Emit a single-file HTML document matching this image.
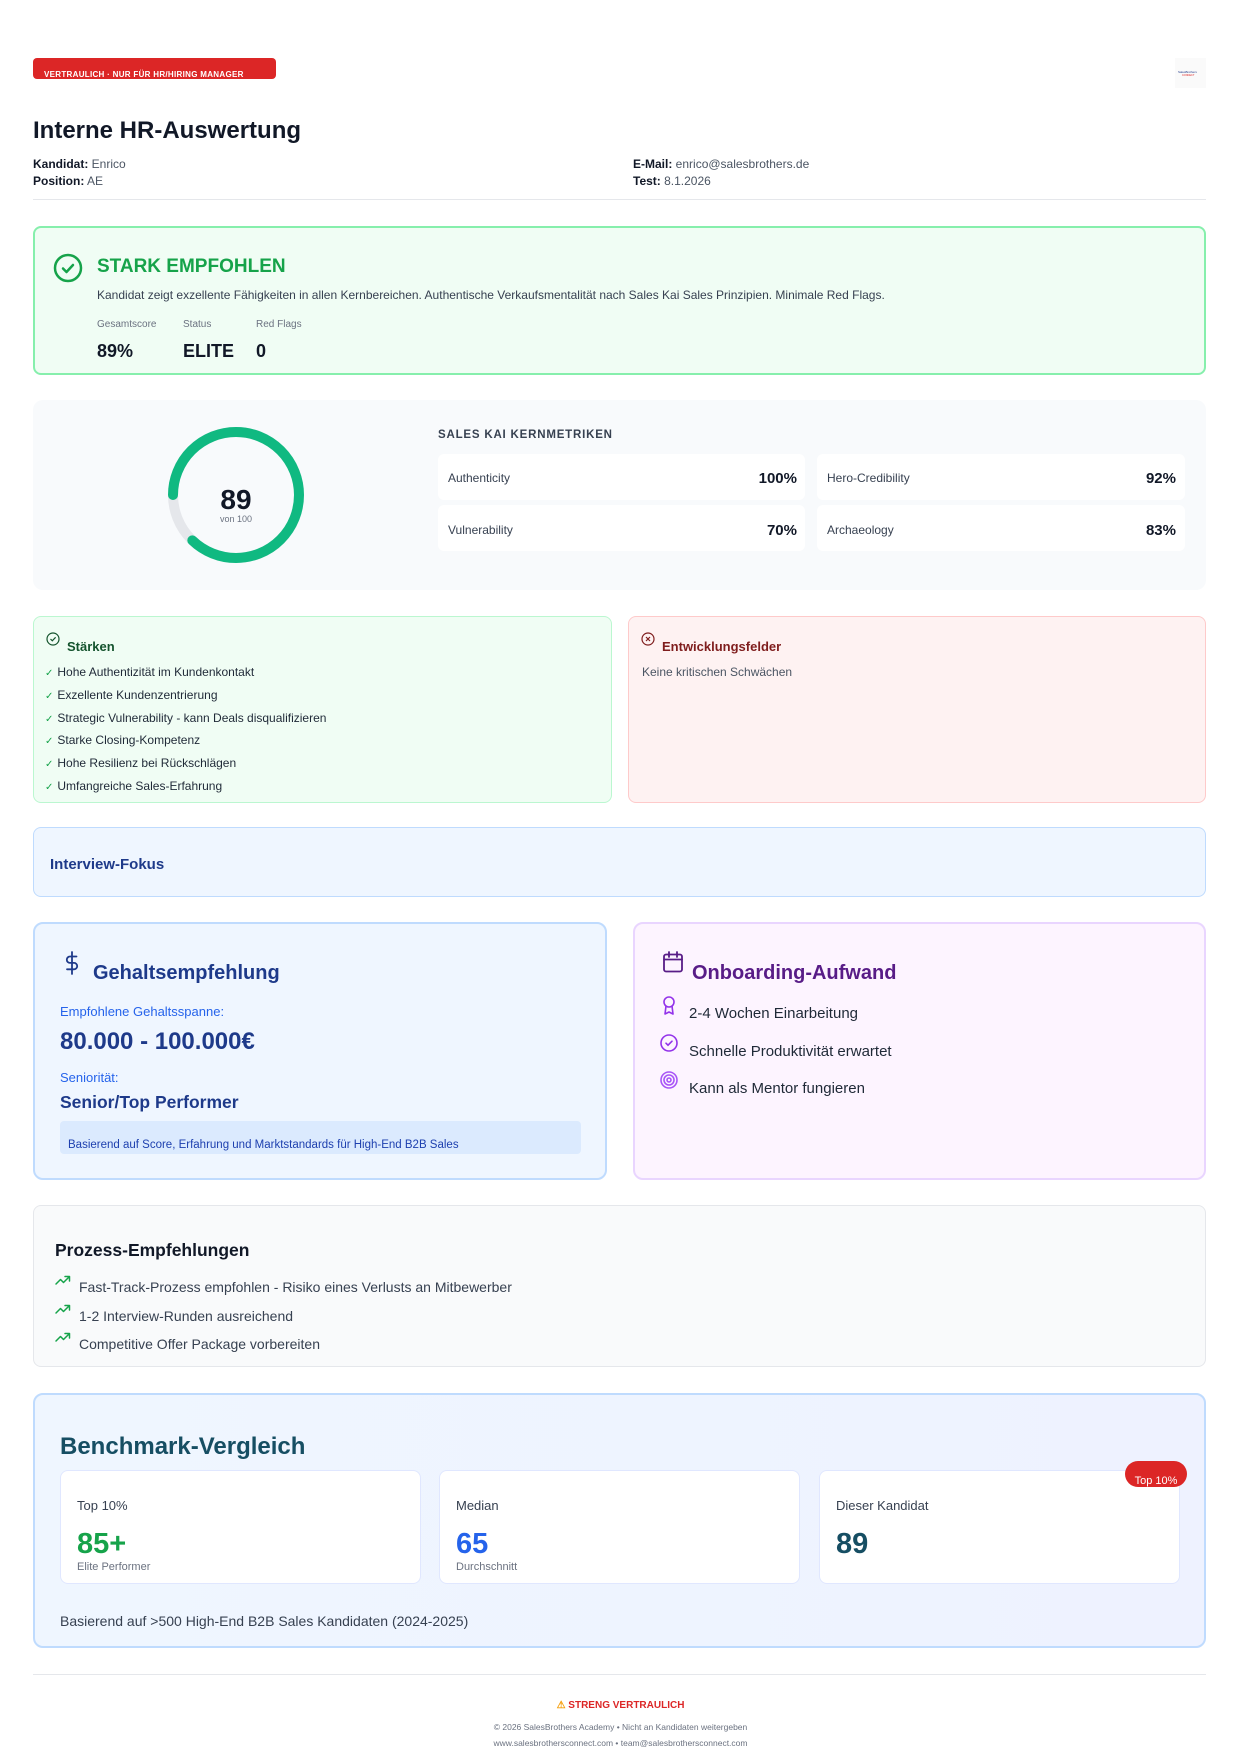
<!DOCTYPE html>
<html><head><meta charset="utf-8">
<style>
*{margin:0;padding:0;box-sizing:border-box}
body{width:1241px;height:1754px;position:relative;background:#fff;font-family:"Liberation Sans",Arial,sans-serif;color:#111827;overflow:hidden}
.t{position:absolute;white-space:nowrap;line-height:1}
.box{position:absolute}
b{font-weight:700}
svg{position:absolute;overflow:visible}
.li{position:absolute;left:45px;white-space:nowrap;line-height:1;font-size:12px;color:#1f2937}
.li i{font-style:normal;color:#16a34a;font-size:10px;margin-right:4px}
</style></head><body>

<!-- header -->
<div class="box" style="left:33px;top:58px;width:243px;height:21px;background:#dc2626;border-radius:4px"></div>
<div class="t" style="left:44px;top:71px;font-size:8px;font-weight:700;color:#fff;letter-spacing:0.3px">VERTRAULICH · NUR FÜR HR/HIRING MANAGER</div>
<div class="box" style="left:1175px;top:58px;width:31px;height:30px;background:#fafafa"></div>
<div class="t" style="left:1178px;top:71px;font-size:3px;color:#1e3a8a">SalesBrothers</div>
<div class="t" style="left:1182px;top:75px;font-size:2.5px;color:#dc2626">CONNECT</div>

<div class="t" style="left:33px;top:119px;font-size:24px;font-weight:700;color:#111827">Interne HR-Auswertung</div>
<div class="t" style="left:33px;top:158px;font-size:12px;color:#4b5563"><b style="color:#111827">Kandidat:</b> Enrico</div>
<div class="t" style="left:33px;top:175px;font-size:12px;color:#4b5563"><b style="color:#111827">Position:</b> AE</div>
<div class="t" style="left:633px;top:158px;font-size:12px;color:#4b5563"><b style="color:#111827">E-Mail:</b> enrico@salesbrothers.de</div>
<div class="t" style="left:633px;top:175px;font-size:12px;color:#4b5563"><b style="color:#111827">Test:</b> 8.1.2026</div>
<div class="box" style="left:33px;top:199px;width:1173px;height:1px;background:#e5e7eb"></div>

<!-- recommendation -->
<div class="box" style="left:33px;top:226px;width:1173px;height:149px;background:#f0fdf4;border:2px solid #86efac;border-radius:8px"></div>
<svg style="left:53px;top:253px" width="30" height="30" viewBox="0 0 30 30"><circle cx="15" cy="15" r="13" fill="none" stroke="#16a34a" stroke-width="2.5"/><path d="M10 15.5l3.5 3.5 6.5-7" fill="none" stroke="#16a34a" stroke-width="2.5" stroke-linecap="round" stroke-linejoin="round"/></svg>
<div class="t" style="left:97px;top:257px;font-size:19px;font-weight:700;color:#16a34a">STARK EMPFOHLEN</div>
<div class="t" style="left:97px;top:289px;font-size:12px;color:#374151">Kandidat zeigt exzellente Fähigkeiten in allen Kernbereichen. Authentische Verkaufsmentalität nach Sales Kai Sales Prinzipien. Minimale Red Flags.</div>
<div class="t" style="left:97px;top:320px;font-size:10px;color:#6b7280">Gesamtscore</div>
<div class="t" style="left:183px;top:320px;font-size:10px;color:#6b7280">Status</div>
<div class="t" style="left:256px;top:320px;font-size:10px;color:#6b7280">Red Flags</div>
<div class="t" style="left:97px;top:342px;font-size:18px;font-weight:700;color:#111827">89%</div>
<div class="t" style="left:183px;top:342px;font-size:18px;font-weight:700;color:#111827">ELITE</div>
<div class="t" style="left:256px;top:342px;font-size:18px;font-weight:700;color:#111827">0</div>

<!-- metrics -->
<div class="box" style="left:33px;top:400px;width:1173px;height:190px;background:#f8fafc;border-radius:10px"></div>
<svg style="left:166px;top:425px" width="140" height="140" viewBox="0 0 140 140">
<circle cx="70" cy="70" r="63" fill="none" stroke="#e5e7eb" stroke-width="10"/>
<circle cx="70" cy="70" r="63" fill="none" stroke="#10b981" stroke-width="10" stroke-linecap="round" stroke-dasharray="345 400" transform="rotate(180 70 70)"/>
</svg>
<div class="t" style="left:186px;top:486px;width:100px;text-align:center;font-size:28px;font-weight:700;color:#111827">89</div>
<div class="t" style="left:186px;top:515px;width:100px;text-align:center;font-size:9px;color:#6b7280">von 100</div>
<div class="t" style="left:438px;top:430px;font-size:11.5px;font-weight:700;color:#374151;letter-spacing:0.8px">SALES KAI KERNMETRIKEN</div>
<div class="box" style="left:438px;top:454px;width:367px;height:46px;background:#fff;border-radius:6px"></div>
<div class="box" style="left:817px;top:454px;width:368px;height:46px;background:#fff;border-radius:6px"></div>
<div class="box" style="left:438px;top:505px;width:367px;height:46px;background:#fff;border-radius:6px"></div>
<div class="box" style="left:817px;top:505px;width:368px;height:46px;background:#fff;border-radius:6px"></div>
<div class="t" style="left:448px;top:472px;font-size:12px;color:#374151">Authenticity</div>
<div class="t" style="left:697px;top:471px;width:100px;text-align:right;font-size:15px;font-weight:700;color:#111827">100%</div>
<div class="t" style="left:827px;top:472px;font-size:12px;color:#374151">Hero-Credibility</div>
<div class="t" style="left:1076px;top:471px;width:100px;text-align:right;font-size:15px;font-weight:700;color:#111827">92%</div>
<div class="t" style="left:448px;top:524px;font-size:12px;color:#374151">Vulnerability</div>
<div class="t" style="left:697px;top:523px;width:100px;text-align:right;font-size:15px;font-weight:700;color:#111827">70%</div>
<div class="t" style="left:827px;top:524px;font-size:12px;color:#374151">Archaeology</div>
<div class="t" style="left:1076px;top:523px;width:100px;text-align:right;font-size:15px;font-weight:700;color:#111827">83%</div>

<!-- strengths / weaknesses -->
<div class="box" style="left:33px;top:616px;width:579px;height:187px;background:#f0fdf4;border:1px solid #bbf7d0;border-radius:8px"></div>
<svg style="left:46px;top:632px" width="14" height="14" viewBox="0 0 14 14"><circle cx="7" cy="7" r="6" fill="none" stroke="#14532d" stroke-width="1.2"/><path d="M4.5 7l1.8 1.8 3.3-3.5" fill="none" stroke="#14532d" stroke-width="1.2"/></svg>
<div class="t" style="left:67px;top:640px;font-size:13px;font-weight:700;color:#14532d">Stärken</div>
<div class="li" style="top:666px"><i>✓</i>Hohe Authentizität im Kundenkontakt</div>
<div class="li" style="top:689px"><i>✓</i>Exzellente Kundenzentrierung</div>
<div class="li" style="top:712px"><i>✓</i>Strategic Vulnerability - kann Deals disqualifizieren</div>
<div class="li" style="top:734px"><i>✓</i>Starke Closing-Kompetenz</div>
<div class="li" style="top:757px"><i>✓</i>Hohe Resilienz bei Rückschlägen</div>
<div class="li" style="top:780px"><i>✓</i>Umfangreiche Sales-Erfahrung</div>

<div class="box" style="left:628px;top:616px;width:578px;height:187px;background:#fef2f2;border:1px solid #fecaca;border-radius:8px"></div>
<svg style="left:641px;top:632px" width="14" height="14" viewBox="0 0 14 14"><circle cx="7" cy="7" r="6" fill="none" stroke="#7f1d1d" stroke-width="1.2"/><path d="M5 5l4 4M9 5l-4 4" stroke="#7f1d1d" stroke-width="1.2"/></svg>
<div class="t" style="left:662px;top:640px;font-size:13px;font-weight:700;color:#7f1d1d">Entwicklungsfelder</div>
<div class="t" style="left:642px;top:666px;font-size:12px;color:#4b5563">Keine kritischen Schwächen</div>

<!-- interview -->
<div class="box" style="left:33px;top:827px;width:1173px;height:70px;background:#eff6ff;border:1px solid #bfdbfe;border-radius:8px"></div>
<div class="t" style="left:50px;top:857px;font-size:15px;font-weight:700;color:#1e3a8a">Interview-Fokus</div>

<!-- salary -->
<div class="box" style="left:33px;top:922px;width:574px;height:258px;background:#eff6ff;border:2px solid #bfdbfe;border-radius:10px"></div>
<svg style="left:64px;top:951px" width="16" height="24" viewBox="0 0 16 24"><path d="M8 1v22M12.5 5.5H6a3.2 3.2 0 0 0 0 6.4h4a3.2 3.2 0 0 1 0 6.4H3" fill="none" stroke="#1e3a8a" stroke-width="1.8" stroke-linecap="round"/></svg>
<div class="t" style="left:93px;top:963px;font-size:20px;font-weight:700;color:#1e3a8a">Gehaltsempfehlung</div>
<div class="t" style="left:60px;top:1005px;font-size:13px;color:#2563eb">Empfohlene Gehaltsspanne:</div>
<div class="t" style="left:60px;top:1030px;font-size:24px;font-weight:700;color:#1e3a8a">80.000 - 100.000€</div>
<div class="t" style="left:60px;top:1071px;font-size:13px;color:#2563eb">Seniorität:</div>
<div class="t" style="left:60px;top:1094px;font-size:17.5px;font-weight:700;color:#1e3a8a">Senior/Top Performer</div>
<div class="box" style="left:60px;top:1121px;width:521px;height:33px;background:#dbeafe;border-radius:4px"></div>
<div class="t" style="left:68px;top:1140px;font-size:11.5px;color:#1e40af">Basierend auf Score, Erfahrung und Marktstandards für High-End B2B Sales</div>

<!-- onboarding -->
<div class="box" style="left:633px;top:922px;width:573px;height:258px;background:#fdf4ff;border:2px solid #e9d5ff;border-radius:10px"></div>
<svg style="left:662px;top:951px" width="22" height="22" viewBox="0 0 22 22"><rect x="2" y="3.5" width="18" height="17" rx="2" fill="none" stroke="#581c87" stroke-width="1.8"/><path d="M2 8.5h18M7 1v5M15 1v5" stroke="#581c87" stroke-width="1.8" stroke-linecap="round"/></svg>
<div class="t" style="left:692px;top:963px;font-size:20px;font-weight:700;color:#581c87">Onboarding-Aufwand</div>
<svg style="left:662px;top:996px" width="14" height="19" viewBox="0 0 14 19"><circle cx="7" cy="6" r="5" fill="none" stroke="#9333ea" stroke-width="1.6"/><path d="M4 10l-1 8 4-2 4 2-1-8" fill="none" stroke="#9333ea" stroke-width="1.6" stroke-linejoin="round"/></svg>
<div class="t" style="left:689px;top:1006px;font-size:15px;color:#1f2937">2-4 Wochen Einarbeitung</div>
<svg style="left:660px;top:1034px" width="18" height="18" viewBox="0 0 18 18"><circle cx="9" cy="9" r="8" fill="none" stroke="#9333ea" stroke-width="1.6"/><path d="M6 9.2l2 2 4-4" fill="none" stroke="#9333ea" stroke-width="1.6" stroke-linecap="round"/></svg>
<div class="t" style="left:689px;top:1044px;font-size:15px;color:#1f2937">Schnelle Produktivität erwartet</div>
<svg style="left:660px;top:1071px" width="18" height="18" viewBox="0 0 18 18"><circle cx="9" cy="9" r="8" fill="none" stroke="#a855f7" stroke-width="1.6"/><circle cx="9" cy="9" r="5" fill="none" stroke="#a855f7" stroke-width="1.6"/><circle cx="9" cy="9" r="2" fill="none" stroke="#a855f7" stroke-width="1.6"/></svg>
<div class="t" style="left:689px;top:1081px;font-size:15px;color:#1f2937">Kann als Mentor fungieren</div>

<!-- process -->
<div class="box" style="left:33px;top:1205px;width:1173px;height:162px;background:#f9fafb;border:1px solid #e5e7eb;border-radius:8px"></div>
<div class="t" style="left:55px;top:1242px;font-size:17.5px;font-weight:700;color:#111827">Prozess-Empfehlungen</div>
<svg style="left:55px;top:1275px" width="16" height="10" viewBox="0 0 16 10"><path d="M1 9l4.5-4.5 3 3L14 2M10 1.5h4.5V6" fill="none" stroke="#16a34a" stroke-width="1.5" stroke-linecap="round" stroke-linejoin="round"/></svg>
<div class="t" style="left:79px;top:1280px;font-size:14px;color:#374151">Fast-Track-Prozess empfohlen - Risiko eines Verlusts an Mitbewerber</div>
<svg style="left:55px;top:1304px" width="16" height="10" viewBox="0 0 16 10"><path d="M1 9l4.5-4.5 3 3L14 2M10 1.5h4.5V6" fill="none" stroke="#16a34a" stroke-width="1.5" stroke-linecap="round" stroke-linejoin="round"/></svg>
<div class="t" style="left:79px;top:1309px;font-size:14px;color:#374151">1-2 Interview-Runden ausreichend</div>
<svg style="left:55px;top:1332px" width="16" height="10" viewBox="0 0 16 10"><path d="M1 9l4.5-4.5 3 3L14 2M10 1.5h4.5V6" fill="none" stroke="#16a34a" stroke-width="1.5" stroke-linecap="round" stroke-linejoin="round"/></svg>
<div class="t" style="left:79px;top:1337px;font-size:14px;color:#374151">Competitive Offer Package vorbereiten</div>

<!-- benchmark -->
<div class="box" style="left:33px;top:1393px;width:1173px;height:255px;background:linear-gradient(90deg,#eff6ff,#eef2ff);border:2px solid #bfdbfe;border-radius:10px"></div>
<div class="t" style="left:60px;top:1435px;font-size:24px;font-weight:700;color:#164e63">Benchmark-Vergleich</div>
<div class="box" style="left:60px;top:1470px;width:361px;height:114px;background:#fff;border:1px solid #e0e7ff;border-radius:8px"></div>
<div class="box" style="left:439px;top:1470px;width:361px;height:114px;background:#fff;border:1px solid #e0e7ff;border-radius:8px"></div>
<div class="box" style="left:819px;top:1470px;width:361px;height:114px;background:#fff;border:1px solid #e0e7ff;border-radius:8px"></div>
<div class="box" style="left:1125px;top:1461px;width:62px;height:26px;background:#dc2626;border-radius:13px"></div>
<div class="t" style="left:1125px;top:1476px;width:62px;text-align:center;font-size:11px;color:#fff">Top 10%</div>
<div class="t" style="left:77px;top:1499px;font-size:13px;color:#374151">Top 10%</div>
<div class="t" style="left:77px;top:1530px;font-size:29px;font-weight:700;color:#16a34a">85+</div>
<div class="t" style="left:77px;top:1562px;font-size:11px;color:#6b7280">Elite Performer</div>
<div class="t" style="left:456px;top:1499px;font-size:13px;color:#374151">Median</div>
<div class="t" style="left:456px;top:1530px;font-size:29px;font-weight:700;color:#2563eb">65</div>
<div class="t" style="left:456px;top:1562px;font-size:11px;color:#6b7280">Durchschnitt</div>
<div class="t" style="left:836px;top:1499px;font-size:13px;color:#374151">Dieser Kandidat</div>
<div class="t" style="left:836px;top:1530px;font-size:29px;font-weight:700;color:#164e63">89</div>
<div class="t" style="left:60px;top:1614px;font-size:14px;color:#374151">Basierend auf &gt;500 High-End B2B Sales Kandidaten (2024-2025)</div>

<!-- footer -->
<div class="box" style="left:33px;top:1674px;width:1173px;height:1px;background:#e5e7eb"></div>
<div class="t" style="left:0;top:1701px;width:1241px;text-align:center;font-size:10px;font-weight:700;color:#dc2626"><span style="color:#f59e0b">⚠</span> STRENG VERTRAULICH</div>
<div class="t" style="left:0;top:1723px;width:1241px;text-align:center;font-size:8.5px;color:#6b7280">© 2026 SalesBrothers Academy • Nicht an Kandidaten weitergeben</div>
<div class="t" style="left:0;top:1739px;width:1241px;text-align:center;font-size:8.5px;color:#6b7280">www.salesbrothersconnect.com • team@salesbrothersconnect.com</div>
</body></html>
